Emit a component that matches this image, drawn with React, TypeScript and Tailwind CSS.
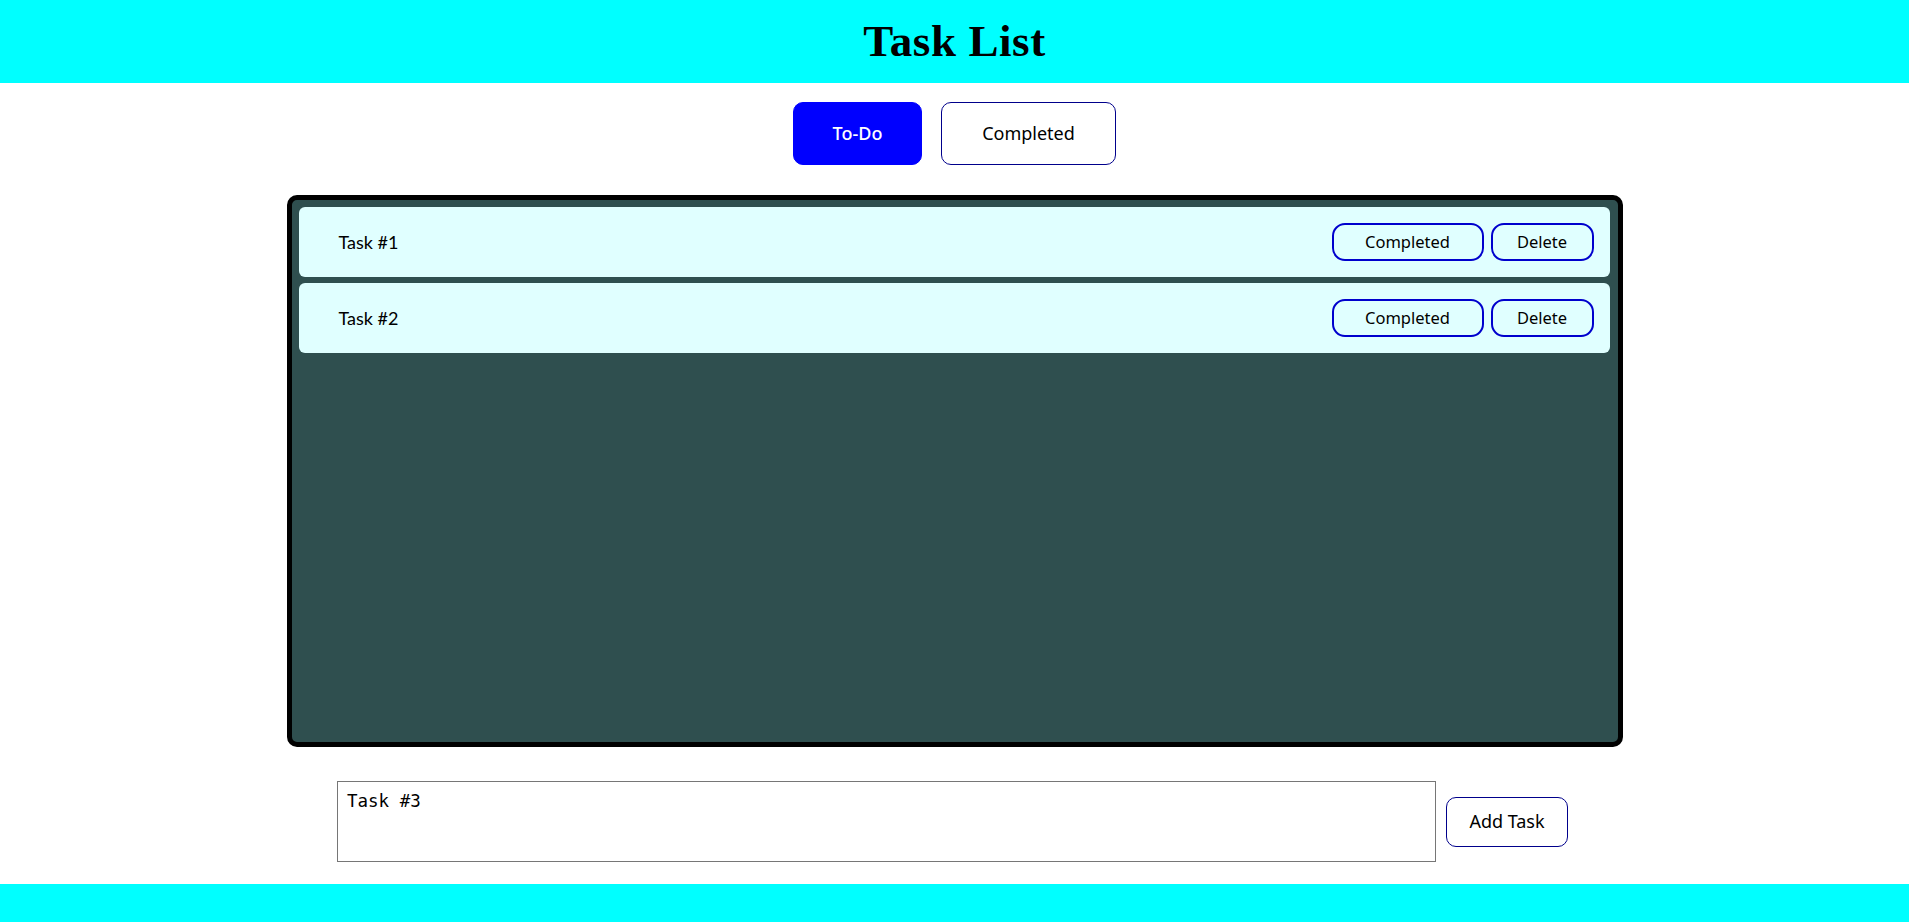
import React from "react";

const tasks = ["Task #1", "Task #2"];

export default function App() {
  return (
    <div className="flex h-[922px] flex-col overflow-hidden bg-white">
      <header className="flex h-[83px] shrink-0 items-center justify-center bg-[#00ffff]">
        <h1 className="font-['Liberation_Serif',serif] text-[45px] font-bold leading-none tracking-[0.6px] text-black">
          Task List
        </h1>
      </header>

      <div className="mt-[19px] flex shrink-0 justify-center gap-[19px]">
        <button className="h-[63px] w-[129px] rounded-[10px] border border-[#0000ff] bg-[#0000ff] font-['Noto_Sans',sans-serif] text-[18px] font-medium text-white">
          To-Do
        </button>
        <button className="h-[63px] w-[175px] rounded-[10px] border border-[#00008b] bg-white font-['Noto_Sans',sans-serif] text-[18px] text-black">
          Completed
        </button>
      </div>

      <main className="mx-auto mt-[30px] flex h-[552px] w-[1336px] shrink-0 flex-col gap-[6px] rounded-[10px] border-[5px] border-black bg-[#2f4f4f] pl-[7px] pr-[8px] py-[7px]">
        {tasks.map((t) => (
          <div
            key={t}
            className="flex h-[70px] shrink-0 items-center justify-between rounded-[6px] bg-[#e0ffff] pl-[40px] pr-[16px]"
          >
            <span className="font-['Lato',sans-serif] text-[18px] text-black">{t}</span>
            <div className="flex gap-[7px]">
              <button className="h-[38px] w-[152px] rounded-[13px] border-2 border-[#0000cd] bg-transparent font-['Noto_Sans',sans-serif] text-[16.5px] text-black">
                Completed
              </button>
              <button className="h-[38px] w-[103px] rounded-[13px] border-2 border-[#0000cd] bg-transparent font-['Noto_Sans',sans-serif] text-[16.5px] text-black">
                Delete
              </button>
            </div>
          </div>
        ))}
      </main>

      <div className="mt-[34px] flex shrink-0 items-center justify-center gap-[10px] pr-[4px]">
        <textarea
          defaultValue="Task #3"
          className="block h-[81px] w-[1099px] resize-none border border-[#767676] bg-white px-[9px] py-[9px] font-['DejaVu_Sans_Mono',monospace] text-[17.5px] leading-tight text-black outline-none"
        />
        <button className="h-[50px] w-[122px] rounded-[10px] border border-[#00008b] bg-white font-['Noto_Sans',sans-serif] text-[18px] text-black">
          Add Task
        </button>
      </div>

      <div className="mt-auto h-[38px] shrink-0 bg-[#00ffff]" />
    </div>
  );
}
